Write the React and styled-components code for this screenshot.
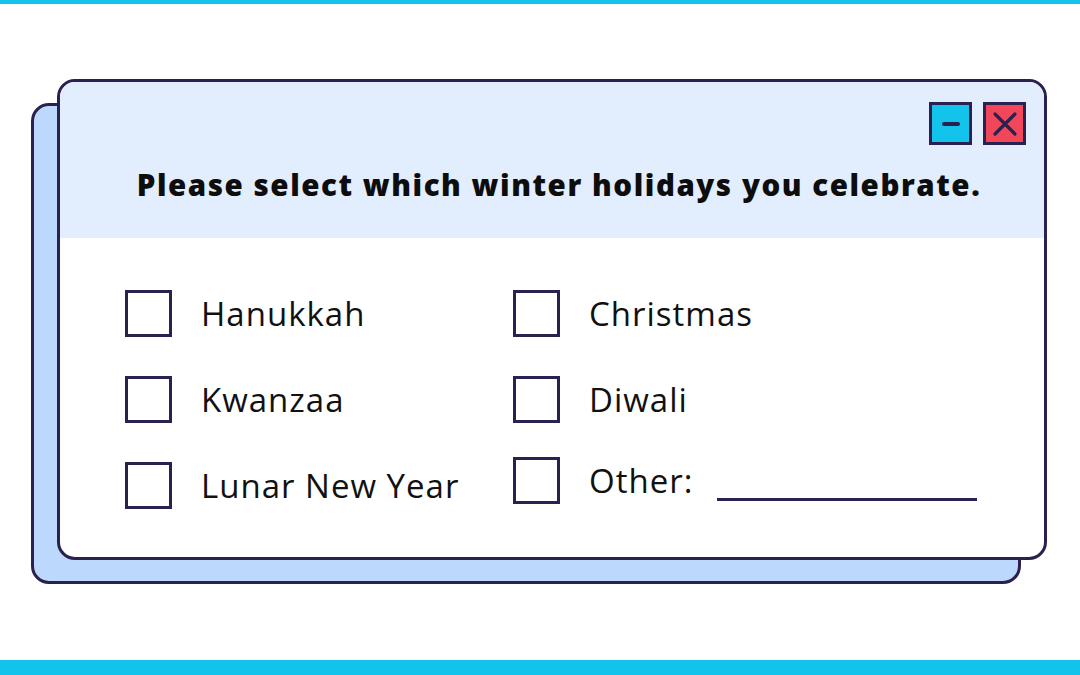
import React from "react";
import styled, { createGlobalStyle } from "styled-components";

const ink = "#2b2150";

const GlobalStyle = createGlobalStyle`
  html { background: #ffffff; }
  body { margin: 0; padding: 0; font-family: "Open Sans", sans-serif; color: #111; }
`;

const Page = styled.div`
  width: 1080px;
  height: 675px;
  display: flex;
  flex-direction: column;
  overflow: hidden;
`;

const Bar = styled.div`
  height: ${(p) => p.h}px;
  background: #12c3ec;
  flex-shrink: 0;
`;

const Stage = styled.div`
  flex: 1;
  isolation: isolate;
  padding: 75px 0 0 57px;
`;

const Window = styled.div`
  position: relative;
  width: 990px;
  height: 481px;
  box-sizing: border-box;
  border: 3px solid ${ink};
  border-radius: 18px;
  background: #ffffff;
  display: flex;
  flex-direction: column;

  &::before {
    content: "";
    position: absolute;
    left: -29px;
    top: 21px;
    width: 990px;
    height: 481px;
    box-sizing: border-box;
    border: 3px solid ${ink};
    border-radius: 18px;
    background: #bcd9fd;
    z-index: -1;
  }
`;

const Header = styled.div`
  height: 156px;
  background: #e2eefe;
  border-radius: 15px 15px 0 0;
  display: flex;
  flex-direction: column;
`;

const Controls = styled.div`
  display: flex;
  justify-content: flex-end;
  gap: 11px;
  padding: 20px 18px 0 0;
`;

const WinButton = styled.div`
  width: 43px;
  height: 43px;
  box-sizing: border-box;
  border: 3px solid ${ink};
  background: ${(p) => p.bg};
  display: flex;
  align-items: center;
  justify-content: center;
`;

const Title = styled.h1`
  margin: 21px 0 0 14px;
  text-align: center;
  font-family: "Open Sans", sans-serif;
  font-weight: 800;
  font-size: 29.5px;
  line-height: 38px;
  letter-spacing: 1.55px;
  color: #0d0d0d;
`;

const Body = styled.div`
  flex: 1;
  display: grid;
  grid-template-columns: 388px 1fr;
  grid-auto-rows: 86px;
  padding: 52px 0 0 65px;
`;

const Item = styled.div`
  display: flex;
  align-items: flex-start;
  margin-top: ${(p) => (p.$shift ? -5 : 0)}px;
`;

const Box = styled.div`
  width: 47px;
  height: 47px;
  box-sizing: border-box;
  border: 3px solid ${ink};
  flex-shrink: 0;
`;

const Label = styled.span`
  margin-left: 29px;
  line-height: 47px;
  font-family: "Open Sans", sans-serif;
  font-size: 33px;
  letter-spacing: 1px;
  color: #111;
`;

const Blank = styled.span`
  width: 260px;
  height: 0;
  border-bottom: 3px solid ${ink};
  margin: 41px 0 0 24px;
`;

const rows = [
  ["Hanukkah", "Christmas"],
  ["Kwanzaa", "Diwali"],
  ["Lunar New Year", "Other:"],
];

export default function App() {
  return (
    <Page>
      <GlobalStyle />
      <Bar h={4} />
      <Stage>
        <Window>
          <Header>
            <Controls>
              <WinButton bg="#12c3ec">
                <svg width="20" height="6" viewBox="0 0 20 6">
                  <path d="M3 3h14" stroke={ink} strokeWidth="4" strokeLinecap="round" />
                </svg>
              </WinButton>
              <WinButton bg="#f2475a">
                <svg width="26" height="26" viewBox="0 0 26 26">
                  <path d="M3 3L23 23M23 3L3 23" stroke={ink} strokeWidth="3.2" strokeLinecap="round" />
                </svg>
              </WinButton>
            </Controls>
            <Title>Please select which winter holidays you celebrate.</Title>
          </Header>
          <Body>
            {rows.map(([a, b]) => (
              <React.Fragment key={a}>
                <Item>
                  <Box />
                  <Label>{a}</Label>
                </Item>
                <Item $shift={b === "Other:"}>
                  <Box />
                  <Label>{b}</Label>
                  {b === "Other:" && <Blank />}
                </Item>
              </React.Fragment>
            ))}
          </Body>
        </Window>
      </Stage>
      <Bar h={15} />
    </Page>
  );
}
